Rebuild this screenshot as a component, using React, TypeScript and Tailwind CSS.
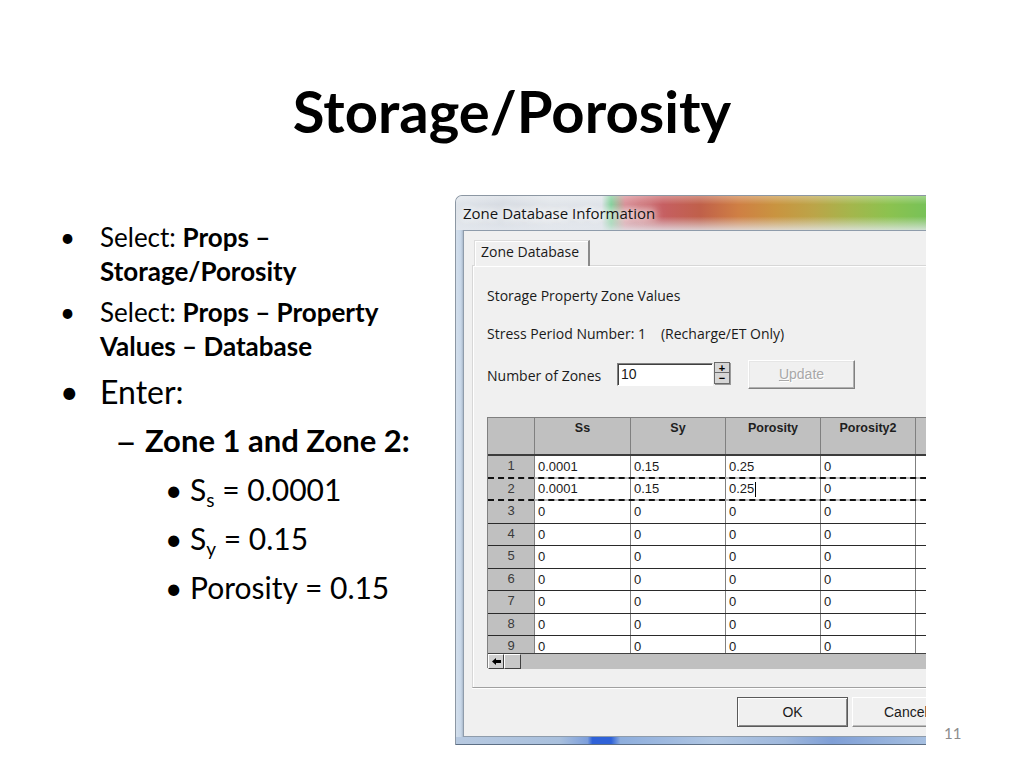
import React from 'react';

const rows: string[][] = [
  ['1', '0.0001', '0.15', '0.25', '0'],
  ['2', '0.0001', '0.15', '0.25', '0'],
  ['3', '0', '0', '0', '0'],
  ['4', '0', '0', '0', '0'],
  ['5', '0', '0', '0', '0'],
  ['6', '0', '0', '0', '0'],
  ['7', '0', '0', '0', '0'],
  ['8', '0', '0', '0', '0'],
  ['9', '0', '0', '0', '0'],
];
const rowH = ['h-[23px]', 'h-[22px]', 'h-[23px]', 'h-[22px]', 'h-[23px]', 'h-[22px]', 'h-[23px]', 'h-[22px]', 'h-[23px]'];
const colW = ['w-[96px]', 'w-[95px]', 'w-[95px]', 'w-[95px]', 'w-[95px]'];

function LeftText() {
  return (
    <div className="w-[455px] shrink-0 pl-[60px] pt-[80px] font-['Lato',sans-serif] text-black">
      <div className="flex text-[26px] leading-[34px]">
        <span className="w-[40px] shrink-0">•</span>
        <span>
          Select: <b>Props –</b>
          <br />
          <b>Storage/Porosity</b>
        </span>
      </div>
      <div className="flex text-[26px] leading-[34px] mt-[7px]">
        <span className="w-[40px] shrink-0">•</span>
        <span>
          Select: <b>Props – Property</b>
          <br />
          <b>Values – Database</b>
        </span>
      </div>
      <div className="flex text-[32px] leading-[36px] mt-[11px]">
        <span className="w-[40px] shrink-0">•</span>
        <span>Enter:</span>
      </div>
      <div className="flex text-[31px] leading-[40px] mt-[10px] pl-[55px] font-bold">
        <span className="w-[30px] shrink-0 font-normal text-[38px] leading-[40px]">–</span>
        <span>Zone 1 and Zone 2:</span>
      </div>
      <div className="pl-[105px] mt-[5px] text-[30px] leading-[49px]">
        <div className="flex h-[49px]">
          <span className="w-[25px] shrink-0">•</span>
          <span>
            S<span className="text-[19px] leading-none relative top-[6px]">s</span> = 0.0001
          </span>
        </div>
        <div className="flex h-[49px]">
          <span className="w-[25px] shrink-0">•</span>
          <span>
            S<span className="text-[19px] leading-none relative top-[6px]">y</span> = 0.15
          </span>
        </div>
        <div className="flex h-[49px]">
          <span className="w-[25px] shrink-0">•</span>
          <span>Porosity = 0.15</span>
        </div>
      </div>
    </div>
  );
}

function Grid() {
  return (
    <div className="w-[600px] h-[251px] flex flex-col bg-[#c0c0c0] border-l border-t border-[#808080] font-['Liberation_Sans',Arial,sans-serif]">
      <div className="h-[38px] shrink-0 flex border-b-2 border-[#3c3c3c]">
        <div className="w-[47px] shrink-0 border-r border-[#808080]" />
        {['Ss', 'Sy', 'Porosity', 'Porosity2', ''].map((h, i) => (
          <div
            key={i}
            className={`${colW[i]} shrink-0 border-r border-[#808080] text-center text-[12.5px] leading-[16px] pt-[2px] font-bold text-[#1e1e1e]`}
          >
            {h}
          </div>
        ))}
      </div>
      <div className="h-[197px] shrink-0 overflow-hidden">
        {rows.map((r, ri) => {
          const dashed = ri === 0 || ri === 1;
          return (
            <div
              key={ri}
              className={`${rowH[ri]} flex ${dashed ? 'border-b-2 border-dashed border-[#111]' : 'border-b border-[#2a2a2a]'}`}
            >
              <div className="w-[47px] shrink-0 border-r border-[#808080] bg-[#c0c0c0] text-center text-[13px] leading-[20px] text-[#3a3a3a]">
                {r[0]}
              </div>
              {[1, 2, 3, 4, 5].map((c, ci) => (
                <div
                  key={c}
                  className={`${colW[ci]} shrink-0 border-r border-[#808080] bg-white pl-[3px] text-[13px] leading-[20px] text-[#1a1a1a] flex items-center`}
                >
                  {c <= 4 ? r[c] : ''}
                  {ri === 1 && c === 3 && <span className="ml-[1px] w-px h-[15px] bg-black" />}
                </div>
              ))}
            </div>
          );
        })}
      </div>
      <div className="h-[16px] shrink-0 flex border-t border-[#404040] bg-[#c0c0c0]">
        <div className="w-[16px] h-[15px] shrink-0 border border-t-white border-l-white border-r-[#404040] border-b-[#404040] bg-[#d0d0d0] flex items-center justify-center">
          <svg width="9" height="7" viewBox="0 0 9 7">
            <path d="M0 3.5 L4 0 L4 2 L9 2 L9 5 L4 5 L4 7 Z" fill="#000" />
          </svg>
        </div>
        <div className="w-[17px] h-[15px] shrink-0 border border-t-white border-l-white border-r-[#404040] border-b-[#404040] bg-[#c8c8c8]" />
        <div className="flex-1" />
      </div>
    </div>
  );
}

function Dialog() {
  return (
    <div className="mt-[55px] w-[471px] h-[550px] shrink-0 overflow-hidden rounded-tl-[7px] flex flex-col bg-[#c9d6e4] border-t border-l border-[#8c97a3]">
      <div className="h-[34px] shrink-0 flex items-center pl-[7px] bg-[linear-gradient(180deg,rgba(255,255,255,0.3)_0%,rgba(255,255,255,0)_25%,rgba(255,255,255,0)_60%,rgba(228,232,238,0.8)_100%),linear-gradient(90deg,#dfe4ea_0%,#d6dbe2_10%,#e1e5ea_20%,#dfe3e9_31%,#7fcf98_33%,#d88a92_36%,#c65f62_44%,#c0604a_52%,#cf7f44_60%,#c99440_68%,#bca448_76%,#a4b64c_84%,#8cc24f_92%,#78c258_100%)]">
        <span className="font-['Open_Sans',sans-serif] text-[15px] leading-[20px] text-[#141414] [text-shadow:0_0_6px_#fff,0_0_10px_#fff,0_0_14px_#fff]">
          Zone Database Information
        </span>
      </div>
      <div className="flex h-[507px] shrink-0">
        <div className="w-[7px] shrink-0 bg-[linear-gradient(90deg,#d3dfec_0px,#c8d7e8_5px,#aab9ca_7px)]" />
        <div className="w-[560px] shrink-0 bg-[#f0f0f0] border-l border-t border-b border-[#8f9cab] flex flex-col font-['Open_Sans',sans-serif] text-[#1a1a1a]">
          <div className="h-[34px] shrink-0 flex items-end pl-[10px]">
            <div className="relative z-10 w-[116px] h-[26px] -mb-[1px] bg-[#f0f0f0] border-l border-t border-[#dcdcdc] border-r-2 border-r-[#8a8a8a] shadow-[inset_1px_1px_0_#fff] pl-[6px] text-[14px] leading-[22px]">
              Zone Database
            </div>
          </div>
          <div className="ml-[8px] h-[423px] shrink-0 border-l border-t border-[#d7d7d7] border-b border-b-[#a0a0a0] shadow-[inset_1px_1px_0_#fff,0_1px_0_#fff] pl-[14px] pt-[22px] flex flex-col">
            <div className="text-[14px] leading-[16px]">Storage Property Zone Values</div>
            <div className="text-[14px] leading-[16px] mt-[22px]">
              Stress Period Number: 1<span className="ml-[15px]">(Recharge/ET Only)</span>
            </div>
            <div className="h-[29px] mt-[18px] flex items-center">
              <div className="w-[130px] shrink-0 text-[14px] leading-[16px] pt-[3px]">Number of Zones</div>
              <div className="w-[96px] h-[23px] shrink-0 bg-white border border-t-[#808080] border-l-[#808080] border-b-white border-r-white shadow-[inset_1px_1px_0_#404040] pl-[3px] font-['Liberation_Sans',Arial,sans-serif] text-[14px] leading-[20px]">
                10
              </div>
              <div className="w-[16px] h-[22px] ml-[1px] shrink-0 flex flex-col border border-[#6a6a6a] bg-[#d6d6d6] shadow-[1px_1px_0_#9a9a9a] self-start mt-[2px]">
                <div className="h-[10px] flex items-center justify-center text-[11px] leading-[10px] font-bold text-black border-b border-[#6a6a6a] font-['Liberation_Sans',sans-serif]">+</div>
                <div className="flex-1 flex items-center justify-center text-[11px] leading-[10px] font-bold text-black font-['Liberation_Sans',sans-serif]">−</div>
              </div>
              <div className="w-[107px] h-[29px] ml-[18px] shrink-0 border border-t-white border-l-white border-b-[#808080] border-r-[#808080] shadow-[inset_-1px_-1px_0_#b0b0b0,inset_1px_1px_0_#e6e6e6] flex items-center justify-center font-['Liberation_Sans',Arial,sans-serif] text-[14px] text-[#a8a8a8] [text-shadow:1px_1px_0_#fff]">
                <span>
                  <span className="underline">U</span>pdate
                </span>
              </div>
            </div>
            <div className="mt-[28px]">
              <Grid />
            </div>
          </div>
          <div className="mt-[9px] pl-[273px] flex gap-[4px]">
            <div className="w-[111px] h-[30px] shrink-0 border border-[#5a5a5a] shadow-[inset_1px_1px_0_#fff,inset_-1px_-1px_0_#8a8a8a] flex items-center justify-center font-['Liberation_Sans',Arial,sans-serif] text-[14px] text-[#1a1a1a]">
              OK
            </div>
            <div className="w-[111px] h-[30px] shrink-0 border border-t-white border-l-white border-b-[#8a8a8a] border-r-[#8a8a8a] shadow-[inset_-1px_-1px_0_#bdbdbd] flex items-center pl-[31px] font-['Liberation_Sans',Arial,sans-serif] text-[14px] text-[#1a1a1a]">
              Cancel
            </div>
          </div>
        </div>
      </div>
      <div className="h-[8px] shrink-0 border-b border-[#5d6f85] bg-[linear-gradient(90deg,#b7c9e0_0%,#a9c0dd_22%,#7d9fdb_28%,#2f62d8_29%,#2f62d8_33%,#8eaedd_35%,#b0c6e2_55%,#9fb8dc_70%,#7f9fd6_80%,#a6bfe0_100%)]" />
    </div>
  );
}

export default function App() {
  return (
    <div className="w-[1024px] h-[768px] bg-white relative overflow-hidden font-['Lato',sans-serif] text-black">
      <h1 className="pt-[82px] h-[140px] text-center text-[58px] leading-[58px] font-bold">Storage/Porosity</h1>
      <div className="flex items-start">
        <LeftText />
        <Dialog />
      </div>
      <div className="absolute left-[944px] top-[724px] text-[15px] leading-[18px] text-[#8c8c8c]">11</div>
    </div>
  );
}
